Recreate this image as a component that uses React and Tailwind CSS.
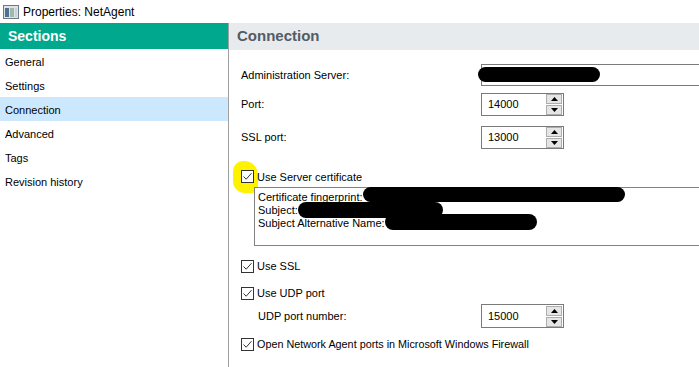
import React from "react";

const F = { fontFamily: '"Liberation Sans", Arial, sans-serif' };

function Check() {
  return (
    <span className="inline-flex h-[13px] w-[13px] shrink-0 items-center justify-center border border-[#333333] bg-white">
      <svg width="11" height="11" viewBox="0 0 11 11">
        <path d="M1.5 5.5 L4.2 8.2 L9.5 2.2" fill="none" stroke="#333" strokeWidth="1" />
      </svg>
    </span>
  );
}

function Spin({ value }) {
  return (
    <div className="flex h-full w-[83px] items-center border border-[#7a7a7a] bg-white">
      <span className="flex-1 pl-[6px] text-[11px] text-black">{value}</span>
      <div className="mr-[1px] flex flex-col gap-[1px]">
        <span className="flex h-[10px] w-[16px] items-center justify-center border border-[#adadad] bg-[#e5e5e5]">
          <svg width="7" height="4" viewBox="0 0 7 4"><path d="M3.5 0 L7 4 L0 4Z" fill="#000" /></svg>
        </span>
        <span className="flex h-[10px] w-[16px] items-center justify-center border border-[#adadad] bg-[#e5e5e5]">
          <svg width="7" height="4" viewBox="0 0 7 4"><path d="M0 0 L7 0 L3.5 4Z" fill="#000" /></svg>
        </span>
      </div>
    </div>
  );
}

function Blot({ className }) {
  return <span className={"absolute rounded-full bg-black " + className} />;
}

export default function App() {
  const items = ["General", "Settings", "Connection", "Advanced", "Tags", "Revision history"];
  return (
    <div className="relative h-[367px] w-[699px] overflow-hidden bg-white text-black" style={F}>
      {/* title bar */}
      <div className="flex h-[23px] items-center bg-white pl-[3px]">
        <svg width="16" height="14" viewBox="0 0 16 14" className="mr-[4px]">
          <rect x="0.5" y="0.5" width="15" height="13" fill="#dfe3e8" stroke="#6d7a86" />
          <rect x="2" y="3" width="4" height="9" fill="#4e6f8f" />
          <rect x="7" y="3" width="4" height="9" fill="#9fb9a8" />
          <rect x="12" y="3" width="2" height="9" fill="#c7d3dc" />
        </svg>
        <span className="text-[12px] text-black">Properties: NetAgent</span>
      </div>
      <div className="flex h-[344px]">
        {/* sidebar */}
        <div className="w-[229px] shrink-0 border-r border-[#a0a0a0]">
          <div className="flex h-[26px] items-center bg-[#00a88e] pl-[8px] text-[14px] font-bold text-white">
            Sections
          </div>
          {items.map((it) => (
            <div
              key={it}
              className={
                "flex h-[24px] items-center pl-[5px] pt-[2px] text-[11px] " +
                (it === "Connection" ? "bg-[#cce8ff]" : "")
              }
            >
              {it}
            </div>
          ))}
        </div>
        {/* main */}
        <div className="relative flex-1 pl-[12px]">
          <div className="-ml-[12px] flex h-[27px] items-center bg-[#e8ebee] pl-[8px] text-[15px] font-bold text-[#545c63]">
            Connection
          </div>
          <div className="mt-[14px] flex h-[22px] items-center">
            <span className="w-[240px] text-[11px]">Administration Server:</span>
            <div className="relative -mr-[4px] h-full flex-1 border border-[#7a7a7a] bg-white">
              <Blot className="left-[-4px] top-[2px] h-[15px] w-[122px]" />
            </div>
          </div>
          <div className="mt-[7px] flex h-[23px] items-center">
            <span className="w-[240px] text-[11px]">Port:</span>
            <Spin value="14000" />
          </div>
          <div className="mt-[10px] flex h-[23px] items-center">
            <span className="w-[240px] text-[11px]">SSL port:</span>
            <Spin value="13000" />
          </div>
          <div className="relative mt-[20px] flex h-[16px] items-center gap-[3px]">
            <span className="absolute left-[-8px] top-[-8px] h-[32px] w-[25px] rounded-tl-[10px] rounded-tr-[14px] rounded-bl-[12px] rounded-br-[6px] bg-[#fff200]" />
            <span className="relative"><Check /></span>
            <span className="relative text-[11px]">Use Server certificate</span>
          </div>
          <div className="relative ml-[13px] mt-[2px] h-[59px] border border-r-0 border-[#828282] bg-white pl-[3px] pt-[3px] text-[11px] leading-[13px]">
            <div className="relative">Certificate fingerprint:</div>
            <div className="relative">Subject:</div>
            <div className="relative">Subject Alternative Name:</div>
            <Blot className="left-[108px] top-[-1px] h-[15px] w-[262px]" />
            <Blot className="left-[43px] top-[14px] h-[16px] w-[145px]" />
            <Blot className="left-[130px] top-[26px] h-[16px] w-[152px]" />
          </div>
          <div className="mt-[12px] flex h-[16px] items-center gap-[3px]">
            <Check />
            <span className="text-[11px]">Use SSL</span>
          </div>
          <div className="mt-[11px] flex h-[16px] items-center gap-[3px]">
            <Check />
            <span className="text-[11px]">Use UDP port</span>
          </div>
          <div className="mt-[3px] flex h-[24px] items-center">
            <span className="w-[240px] pl-[17px] text-[11px]">UDP port number:</span>
            <Spin value="15000" />
          </div>
          <div className="mt-[8px] flex h-[16px] items-center gap-[3px]">
            <Check />
            <span className="text-[10.8px]">Open Network Agent ports in Microsoft Windows Firewall</span>
          </div>
        </div>
      </div>
    </div>
  );
}
